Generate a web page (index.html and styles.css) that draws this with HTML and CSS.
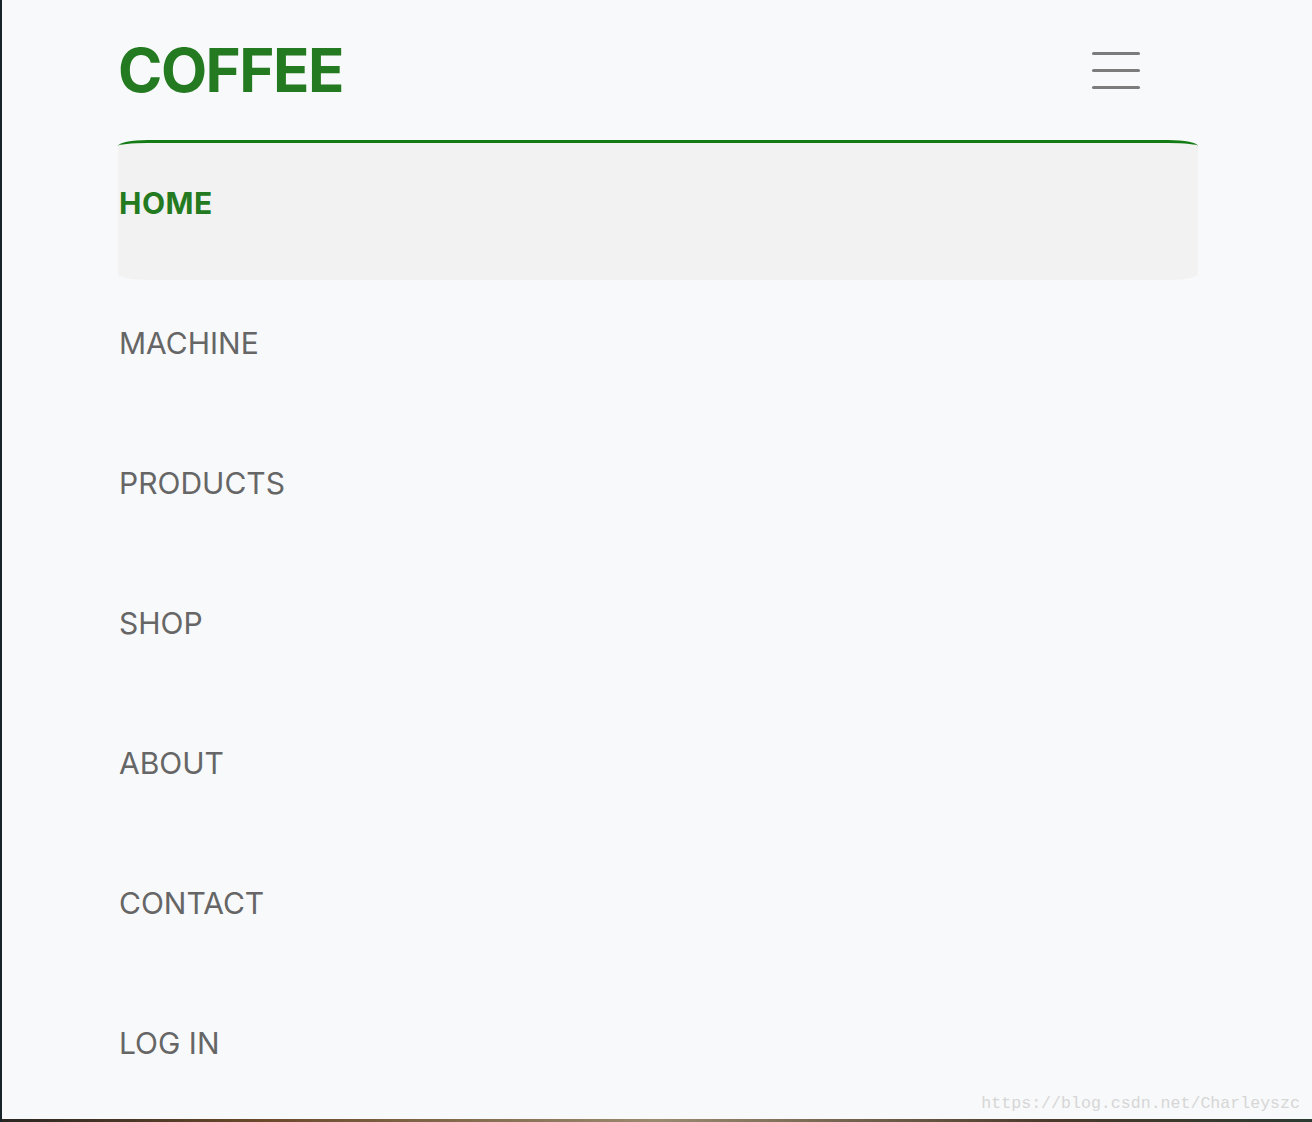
FILE: index.html
```html
<!DOCTYPE html>
<html lang="en">
<head>
    <meta charset="UTF-8">
    <meta name="viewport" content="width=device-width, initial-scale=1.0">
    <title>Coffee</title>
    <link rel="stylesheet" href="styles.css">
</head>
<body>
    <div class="page">
        <header class="topbar">
            <a class="brand" href="#">COFFEE</a>
            <button class="toggler" aria-label="Menu">
                <span></span><span></span><span></span>
            </button>
        </header>
        <nav class="menu">
            <a class="item active" href="#">HOME</a>
            <a class="item" href="#">MACHINE</a>
            <a class="item" href="#">PRODUCTS</a>
            <a class="item" href="#">SHOP</a>
            <a class="item" href="#">ABOUT</a>
            <a class="item" href="#">CONTACT</a>
            <a class="item" href="#">LOG IN</a>
        </nav>
    </div>
    <div class="strip"></div>
    <div class="watermark">https://blog.csdn.net/Charleyszc</div>
</body>
</html>
```

FILE: styles.css
```css
html, body {
    margin: 0;
    padding: 0;
}
body {
    font-family: Inter, "Liberation Sans", Arial, sans-serif;
    background-color: #f8f9fa;
    border-left: 2px solid #17252b;
    height: 1122px;
    position: relative;
    overflow: hidden;
}
.page {
    width: 1080px;
    margin: 0 0 0 116px;
}
.topbar {
    height: 140px;
    display: flex;
    align-items: center;
    justify-content: space-between;
}
.brand {
    font-size: 60px;
    font-weight: 700;
    color: #247a20;
    text-decoration: none;
    letter-spacing: -1.5px;
    line-height: 1;
}
.toggler {
    width: 48px;
    height: 37px;
    margin-right: 58px;
    padding: 0;
    border: 0;
    background: none;
    display: flex;
    flex-direction: column;
    justify-content: space-between;
}
.toggler span {
    display: block;
    height: 3px;
    border-radius: 2px;
    background: #7c7c7c;
}
.menu {
    display: flex;
    flex-direction: column;
}
.item {
    display: block;
    height: 140px;
    box-sizing: border-box;
    padding: 43px 0 0 1px;
    line-height: 40px;
    font-size: 30px;
    color: #666666;
    text-decoration: none;
}
.item.active {
    background: #f2f2f2;
    color: #247a20;
    font-weight: 700;
    letter-spacing: 0.5px;
    border-top: 3px solid #137b13;
    padding-top: 40px;
    border-radius: 30px / 6px;
}
.strip {
    position: absolute;
    left: 0;
    right: 0;
    bottom: 0;
    height: 3px;
    background: linear-gradient(90deg, #2a2622 0%, #6b4a2a 20%, #9a8a70 50%, #4a3a2a 80%, #2b3a30 100%);
}
.watermark {
    position: absolute;
    right: 12px;
    bottom: 9px;
    font-family: "Liberation Mono", monospace;
    font-size: 16.6px;
    color: #d6d6d6;
}
```
